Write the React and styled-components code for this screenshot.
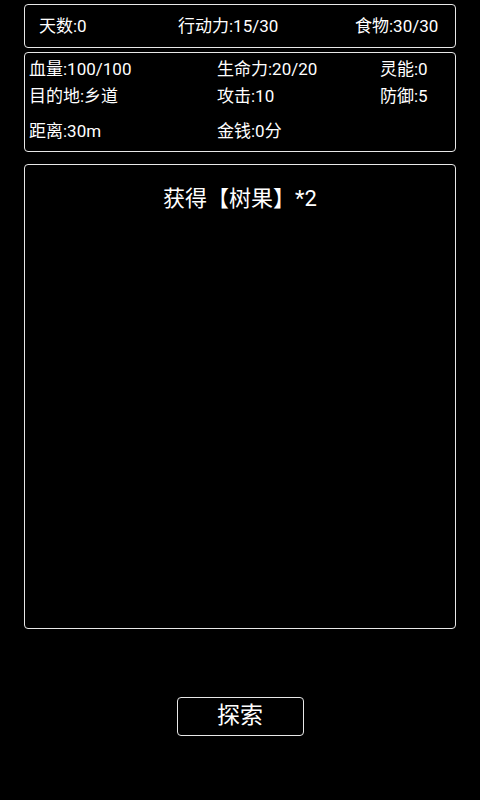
import React from "react"
import styled, { createGlobalStyle } from "styled-components"

const GlobalStyle = createGlobalStyle`
  html, body {
    margin: 0;
    padding: 0;
    background: #000;
  }
  body {
    font-family: Roboto, "Noto Sans CJK SC", sans-serif;
    color: #fff;
  }
`

const Screen = styled.div`
  width: 480px;
  height: 800px;
  box-sizing: border-box;
  padding: 4px 24px 0;
  display: flex;
  flex-direction: column;
  align-items: stretch;
`

const Panel = styled.div`
  box-sizing: border-box;
  border: 1px solid #e8e8e8;
  border-radius: 4px;
`

const TopBar = styled(Panel)`
  height: 44px;
  padding: 0 0 4px 14px;
  display: grid;
  grid-template-columns: 139px 177px 1fr;
  align-items: center;
  font-size: 17px;
`

const StatsPanel = styled(Panel)`
  margin-top: 4px;
  height: 100px;
  padding: 0 0 0 4px;
  display: grid;
  grid-template-columns: 188px 163px 1fr;
  grid-template-rows: 28px 27px 34px;
  font-size: 17px;
  & > :nth-child(n + 7) {
    padding-top: 8px;
  }
`

const Stat = styled.span`
  box-sizing: border-box;
  display: flex;
  align-items: center;
  white-space: nowrap;
`

const LogPanel = styled(Panel)`
  margin-top: 12px;
  height: 465px;
  padding-top: 19px;
  display: flex;
  flex-direction: column;
  align-items: center;
`

const LogLine = styled.div`
  font-size: 22px;
  line-height: 30px;
`

const Footer = styled.div`
  display: flex;
  justify-content: center;
  margin-top: 68px;
`

const ActionButton = styled.button`
  width: 127px;
  height: 39px;
  box-sizing: border-box;
  display: flex;
  align-items: center;
  justify-content: center;
  background: #000;
  color: #fff;
  border: 1px solid #e8e8e8;
  border-radius: 4px;
  font-family: Roboto, "Noto Sans CJK SC", sans-serif;
  font-size: 23px;
  line-height: 1;
  padding: 0 0 2px;
  cursor: pointer;
`

const top = ["天数:0", "行动力:15/30", "食物:30/30"]
const stats = [
  "血量:100/100", "生命力:20/20", "灵能:0",
  "目的地:乡道", "攻击:10", "防御:5",
  "距离:30m", "金钱:0分", "",
]

const App = () => (
  <>
    <GlobalStyle />
    <Screen>
      <TopBar>
        {top.map(t => <span key={t}>{t}</span>)}
      </TopBar>
      <StatsPanel>
        {stats.map((s, i) => <Stat key={i}>{s}</Stat>)}
      </StatsPanel>
      <LogPanel>
        <LogLine>获得【树果】*2</LogLine>
      </LogPanel>
      <Footer>
        <ActionButton>探索</ActionButton>
      </Footer>
    </Screen>
  </>
)

export default App
